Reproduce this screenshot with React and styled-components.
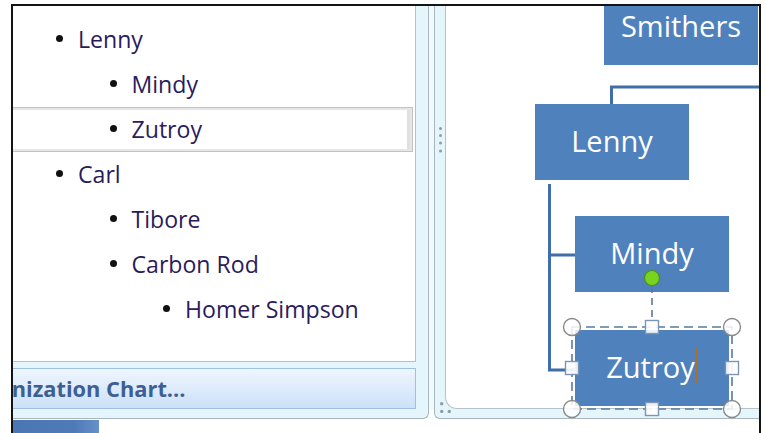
import React from "react";
import styled, { createGlobalStyle } from "styled-components";

const GlobalStyle = createGlobalStyle`
  html, body { margin: 0; padding: 0; background: #fff; overflow: hidden; }
  body { font-family: "Open Sans", "Noto Sans", sans-serif; }
`;

/* window edge: the editor is cut off on the left, top and bottom */
const Screen = styled.div`
  margin: 4px 0 0 11px;
  width: 746px;
  height: 440px;
  border: 2px solid #141414;
  border-bottom: none;
  overflow: hidden;
  display: flex;
  align-items: flex-start;
  background: #fff;
`;

/* ---------- text pane ---------- */
const TextColumn = styled.div`
  flex: none;
  margin-left: -80px;
  width: 496px;
  display: flex;
  flex-direction: column;
`;

const PaneFrame = styled.div`
  box-sizing: border-box;
  height: 413px;
  background: #e4f6fb;
  border-right: 1px solid #a9b6bf;
  border-bottom: 1px solid #a9b6bf;
  border-bottom-right-radius: 6px;
  padding: 0 12px 9px 12px;
  display: flex;
  flex-direction: column;
  gap: 6px;
`;

const ListArea = styled.ul`
  box-sizing: border-box;
  margin: 0;
  height: 356px;
  list-style: none;
  padding: 11px 2px 0 0;
  background: #fff;
  border-right: 1px solid #b6c2ca;
  border-bottom: 1px solid #b6c2ca;
`;

const Item = styled.li`
  box-sizing: border-box;
  height: 45px;
  display: flex;
  align-items: center;
  padding-left: ${(p) => 110 + (p.$level - 1) * 53.5}px;
  padding-bottom: 2px;
  font-size: 23.1px;
  color: #2a1b5c;
  border: 1px solid ${(p) => (p.$active ? "#c3c3c3" : "transparent")};
  box-shadow: ${(p) => (p.$active ? "inset 0 0 0 2px #e6e6e6, inset -3px 0 0 2px #e0e0e0" : "none")};
`;

const Bullet = styled.span`
  flex: none;
  width: 7px;
  height: 7px;
  border-radius: 50%;
  background: #111;
  margin-right: 15px;
`;

const LayoutBar = styled.div`
  box-sizing: border-box;
  height: 41px;
  display: flex;
  align-items: center;
  padding-left: 13px;
  border: 1px solid #9fbfe3;
  background: linear-gradient(#eef6fe, #dceafb 55%, #cde1f7);
  font-size: 21.8px;
  font-weight: 700;
  color: #3e5f93;
  white-space: nowrap;
`;

const PaneTab = styled.div`
  margin-top: 1px;
  width: 166px;
  height: 20px;
  background: linear-gradient(90deg, #4670ae, #4f7ab8 85%, #6690c8);
`;

const Splitter = styled.div`
  flex: none;
  width: 5px;
  height: 404px;
  background: #eefafd;
`;

/* ---------- diagram pane ---------- */
const CanvasFrame = styled.div`
  position: relative;
  flex: 1;
  box-sizing: border-box;
  height: 413px;
  background: #e4f6fb;
  border-left: 1px solid #a9b6bf;
  border-bottom: 1px solid #a9b6bf;
  border-bottom-left-radius: 6px;
  padding: 0 0 9px 10px;
`;

const Canvas = styled.div`
  position: relative;
  box-sizing: border-box;
  height: 100%;
  background: #fff;
  border-left: 1px solid #b6c2ca;
  border-bottom: 1px solid #b6c2ca;
  border-bottom-left-radius: 12px;
`;

const Grip = styled.svg`
  position: absolute;
  left: ${(p) => p.$x}px;
  top: ${(p) => p.$y}px;
  overflow: visible;
`;

const Layer = styled.svg`
  position: absolute;
  left: 0;
  top: 0;
  width: 100%;
  height: 100%;
  overflow: visible;
  pointer-events: none;
`;

const Node = styled.div`
  position: absolute;
  box-sizing: border-box;
  left: ${(p) => p.$x}px;
  top: ${(p) => p.$y}px;
  width: 154px;
  height: 76px;
  padding-bottom: 4px;
  display: flex;
  align-items: center;
  justify-content: center;
  background: #4f81bd;
  color: #fff;
  font-size: 29px;
  line-height: 1;
`;

const Caret = styled.span`
  display: inline-block;
  width: 2px;
  height: 36px;
  margin-left: 1px;
  background: #a8702c;
`;

const items = [
  { label: "Lenny", level: 1 },
  { label: "Mindy", level: 2 },
  { label: "Zutroy", level: 2, active: true },
  { label: "Carl", level: 1 },
  { label: "Tibore", level: 2 },
  { label: "Carbon Rod", level: 2 },
  { label: "Homer Simpson", level: 3 },
];

const nodes = [
  { label: "Smithers", x: 158, y: -17 },
  { label: "Lenny", x: 89, y: 98 },
  { label: "Mindy", x: 129, y: 210 },
  { label: "Zutroy", x: 129, y: 324, editing: true },
];

const sel = { x: 126, y: 321, w: 160, h: 82 };

function SelectionHandles() {
  const cx = sel.x + sel.w / 2;
  const cy = sel.y + sel.h / 2;
  const corners = [
    [sel.x, sel.y],
    [sel.x + sel.w, sel.y],
    [sel.x, sel.y + sel.h],
    [sel.x + sel.w, sel.y + sel.h],
  ];
  const sides = [
    [cx, sel.y],
    [sel.x, cy],
    [sel.x + sel.w, cy],
    [cx, sel.y + sel.h],
  ];
  return (
    <Layer>
      <line x1={cx} y1={280} x2={cx} y2={sel.y - 6} stroke="#58799f" strokeWidth="1.6" strokeDasharray="7 5" />
      <rect x={sel.x} y={sel.y} width={sel.w} height={sel.h} fill="none" stroke="#58799f" strokeWidth="1.6" strokeDasharray="9 5" />
      <circle cx={cx} cy={272} r="7.5" fill="#78d31f" stroke="#4f8f1c" strokeWidth="1.2" />
      {corners.map(([x, y], i) => (
        <circle key={"c" + i} cx={x} cy={y} r="8.5" fill="#fff" fillOpacity="0.85" stroke="#8a8a8a" strokeWidth="1.4" />
      ))}
      {sides.map(([x, y], i) => (
        <rect key={"s" + i} x={x - 6.5} y={y - 6.5} width="13" height="13" fill="#fff" fillOpacity="0.9" stroke="#7b95b5" strokeWidth="1.4" />
      ))}
    </Layer>
  );
}

export default function App() {
  return (
    <>
      <GlobalStyle />
      <Screen>
        <TextColumn>
          <PaneFrame>
            <ListArea>
              {items.map((it) => (
                <Item key={it.label} $level={it.level} $active={it.active}>
                  <Bullet />
                  {it.label}
                </Item>
              ))}
            </ListArea>
            <LayoutBar>Organization Chart...</LayoutBar>
          </PaneFrame>
          <PaneTab />
        </TextColumn>
        <Splitter />
        <CanvasFrame>
          <Canvas>
            <Layer>
              <g fill="none" stroke="#3f6ea8" strokeWidth="3">
                <path d="M165.5 98 V81 H340" />
                <path d="M103.5 178 V364 H129 M103.5 249 H129" />
              </g>
            </Layer>
            {nodes.map((n) => (
              <Node key={n.label} $x={n.x} $y={n.y}>
                {n.label}
                {n.editing && <Caret />}
              </Node>
            ))}
            <SelectionHandles />
          </Canvas>
          <Grip $x={3.5} $y={121} width="3" height="27">
            <g fill="#8e9ba5">
              <circle cx="1.5" cy="1.5" r="1.5" />
              <circle cx="1.5" cy="8.5" r="1.5" />
              <circle cx="1.5" cy="16" r="1.5" />
              <circle cx="1.5" cy="24" r="1.5" />
            </g>
          </Grip>
          <Grip $x={5} $y={395.5} width="11" height="11">
            <g fill="#8e9ba5">
              <circle cx="1.7" cy="1.7" r="1.7" />
              <circle cx="1.7" cy="9.4" r="1.7" />
              <circle cx="9.3" cy="9.4" r="1.7" />
            </g>
          </Grip>
        </CanvasFrame>
      </Screen>
    </>
  );
}
